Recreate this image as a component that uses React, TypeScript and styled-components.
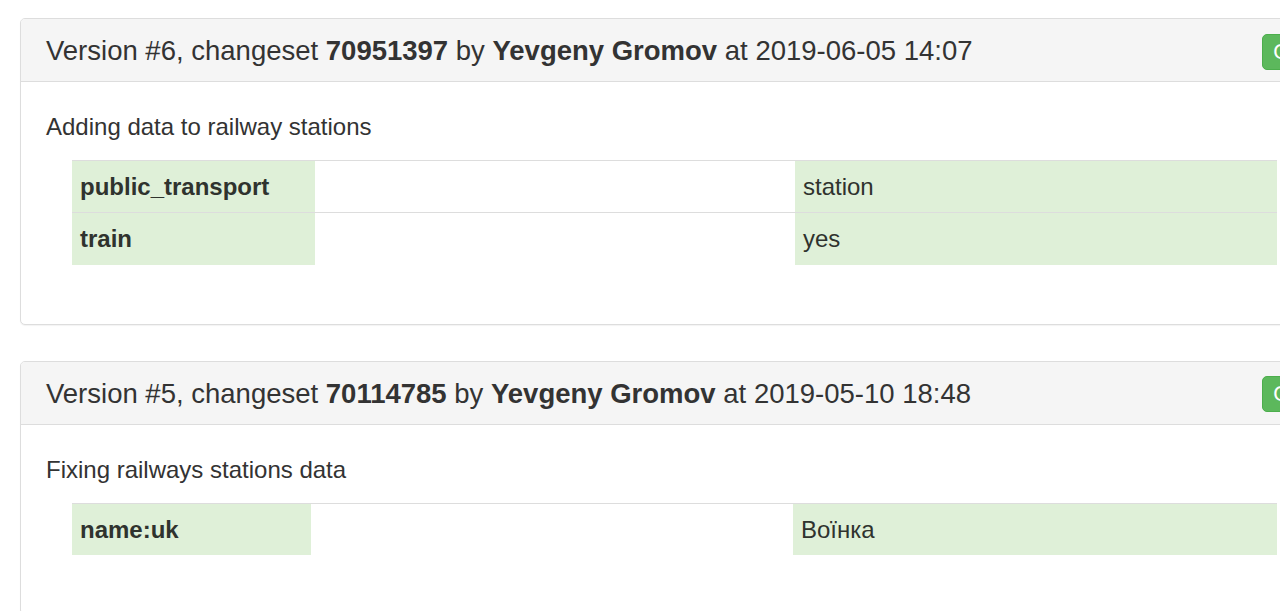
import React from 'react';
import styled, { createGlobalStyle } from 'styled-components';

const GlobalStyle = createGlobalStyle`
  body {
    margin: 0;
    background: #fff;
    overflow: hidden;
    font-family: "Liberation Sans", Arial, sans-serif;
    color: #333;
  }
`;

type Tag = { key: string; value: string };

type Version = {
  num: number;
  changeset: string;
  user: string;
  date: string;
  comment: string;
  keyWidth: number;
  emptyWidth: number;
  tags: Tag[];
};

const versions: Version[] = [
  {
    num: 6,
    changeset: '70951397',
    user: 'Yevgeny Gromov',
    date: '2019-06-05 14:07',
    comment: 'Adding data to railway stations',
    keyWidth: 243,
    emptyWidth: 480,
    tags: [
      { key: 'public_transport', value: 'station' },
      { key: 'train', value: 'yes' },
    ],
  },
  {
    num: 5,
    changeset: '70114785',
    user: 'Yevgeny Gromov',
    date: '2019-05-10 18:48',
    comment: 'Fixing railways stations data',
    keyWidth: 239,
    emptyWidth: 482,
    tags: [{ key: 'name:uk', value: 'Воїнка' }],
  },
];

function App() {
  return (
    <Page>
      <GlobalStyle />
      {versions.map((v) => (
        <Panel key={v.num}>
          <PanelHeading>
            <Title>
              Version #{v.num}, changeset <b>{v.changeset}</b> by <b>{v.user}</b> at {v.date}
            </Title>
            <OpenButton>Open</OpenButton>
          </PanelHeading>
          <PanelBody>
            <Comment>{v.comment}</Comment>
            <TagTable>
              <colgroup>
                <col style={{ width: v.keyWidth }} />
                <col style={{ width: v.emptyWidth }} />
                <col />
              </colgroup>
              <tbody>
                {v.tags.map((t) => (
                  <tr key={t.key}>
                    <KeyCell>{t.key}</KeyCell>
                    <Cell />
                    <Cell success>{t.value}</Cell>
                  </tr>
                ))}
              </tbody>
            </TagTable>
          </PanelBody>
        </Panel>
      ))}
    </Page>
  );
}

export default App;

const Page = styled.div`
  padding: 18px 0 0 20px;
  display: flex;
  flex-direction: column;
  gap: 36px;
`;

const Panel = styled.div`
  width: 1342px;
  flex-shrink: 0;
  border: 1px solid #ddd;
  border-radius: 5px;
  background: #fff;
  box-shadow: 0 1px 1px rgba(0, 0, 0, 0.05);
`;

const PanelHeading = styled.div`
  height: 63px;
  box-sizing: border-box;
  padding: 0 25px;
  display: flex;
  align-items: center;
  justify-content: space-between;
  background: #f5f5f5;
  border-bottom: 1px solid #ddd;
  border-radius: 4px 4px 0 0;
`;

const Title = styled.h3`
  margin: 3px 0 0;
  font-size: 27.5px;
  font-weight: normal;
  line-height: 1.1;
  color: #333;
  white-space: nowrap;

  b {
    font-weight: bold;
  }
`;

const OpenButton = styled.button`
  height: 36px;
  margin-top: 3px;
  padding: 0 10px;
  border: 1px solid #4cae4c;
  border-radius: 5px;
  background: #5cb85c;
  color: #fff;
  font-family: inherit;
  font-size: 22px;
`;

const PanelBody = styled.div`
  padding: 32px 25px 30px;
`;

const Comment = styled.p`
  margin: 0 0 20px;
  font-size: 24px;
  line-height: 26px;
`;

const TagTable = styled.table`
  width: 1205px;
  margin: 0 0 29px 26px;
  border-collapse: collapse;
  table-layout: fixed;
`;

const Cell = styled.td<{ success?: boolean }>`
  height: 52px;
  box-sizing: border-box;
  padding: 1px 8px 0;
  border-top: 1px solid #ddd;
  font-size: 24px;
  line-height: 26px;
  vertical-align: middle;
  color: #2f332e;
  background: ${(p) => (p.success ? '#dff0d8' : '#fff')};
`;

const KeyCell = styled(Cell).attrs({ success: true })`
  font-weight: bold;
`;
